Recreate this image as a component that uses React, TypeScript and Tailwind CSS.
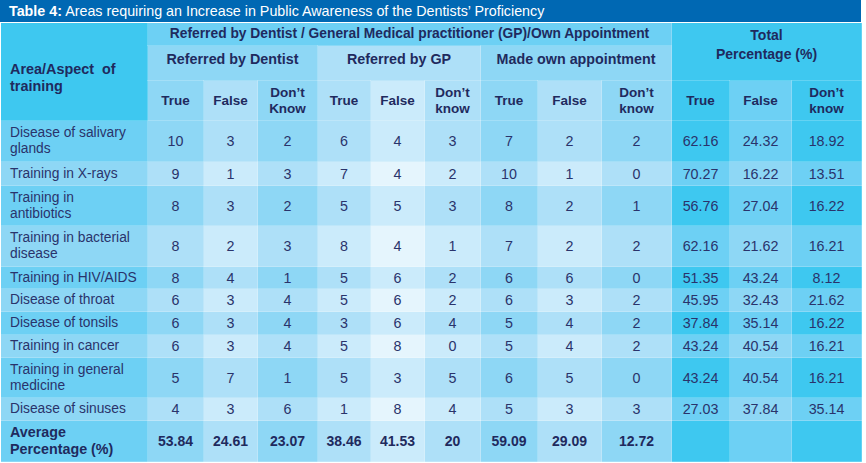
const shades = [
  "bg-[#3ec8f0]",
  "bg-[#6dd0f4]",
  "bg-[#8ed7f5]",
  "bg-[#aee0f8]",
  "bg-[#cbebfb]",
  "bg-[#e5f5fd]",
];

// shade index of each data column on a "dark" row; light rows use one step lighter
const colBase = [2, 3, 2, 3, 4, 3, 2, 3, 2, 0, 1, 0];
const colWidths = [147, 56, 54, 60, 53, 54, 56, 57, 64, 70, 58, 62, 70];

const rows = [
  { label: ["Disease of salivary", "glands"], h: "h-[41px]", v: ["10", "3", "2", "6", "4", "3", "7", "2", "2", "62.16", "24.32", "18.92"] },
  { label: ["Training in X-rays"], h: "h-[24px]", v: ["9", "1", "3", "7", "4", "2", "10", "1", "0", "70.27", "16.22", "13.51"] },
  { label: ["Training in", "antibiotics"], h: "h-[40px]", v: ["8", "3", "2", "5", "5", "3", "8", "2", "1", "56.76", "27.04", "16.22"] },
  { label: ["Training in bacterial", "disease"], h: "h-[41px]", v: ["8", "2", "3", "8", "4", "1", "7", "2", "2", "62.16", "21.62", "16.21"] },
  { label: ["Training in HIV/AIDS"], h: "h-[22px]", v: ["8", "4", "1", "5", "6", "2", "6", "6", "0", "51.35", "43.24", "8.12"] },
  { label: ["Disease of throat"], h: "h-[23px]", v: ["6", "3", "4", "5", "6", "2", "6", "3", "2", "45.95", "32.43", "21.62"] },
  { label: ["Disease of tonsils"], h: "h-[23px]", v: ["6", "3", "4", "3", "6", "4", "5", "4", "2", "37.84", "35.14", "16.22"] },
  { label: ["Training in cancer"], h: "h-[23px]", v: ["6", "3", "4", "5", "8", "0", "5", "4", "2", "43.24", "40.54", "16.21"] },
  { label: ["Training in general", "medicine"], h: "h-[40px]", v: ["5", "7", "1", "5", "3", "5", "6", "5", "0", "43.24", "40.54", "16.21"] },
  { label: ["Disease of sinuses"], h: "h-[23px]", v: ["4", "3", "6", "1", "8", "4", "5", "3", "3", "27.03", "37.84", "35.14"] },
];

const average = ["53.84", "24.61", "23.07", "38.46", "41.53", "20", "59.09", "29.09", "12.72", "", "", ""];

const subHeads: string[][] = [
  ["True"], ["False"], ["Don\u2019t", "Know"],
  ["True"], ["False"], ["Don\u2019t", "know"],
  ["True"], ["False"], ["Don\u2019t", "know"],
  ["True"], ["False"], ["Don\u2019t", "know"],
];

const cell = "border border-white/20 p-0";

const App = () => {
  return (
    <div className="w-[861px] font-['Liberation_Sans',Arial,sans-serif] text-[#2a336b]">
      <div className="h-[22px] bg-[#0068b3] pl-[9px] text-[14.3px] leading-[22px] text-white">
        <span className="font-bold">Table 4:</span> Areas requiring an Increase in Public Awareness of the Dentists’ Proficiency
      </div>
      <table className="w-[861px] table-fixed border-collapse">
        <colgroup>
          {colWidths.map((w, i) => (
            <col key={i} style={{ width: w }} />
          ))}
        </colgroup>
        <thead className="text-[13.5px] font-bold leading-[16px] text-[#1f2a5e]">
          <tr className="h-[23px]">
            <th rowSpan={3} className={`${cell} bg-[#3ec8f0] pl-[9px] pt-[12px] text-left align-middle text-[14.4px] leading-[17px]`}>
              Area/Aspect&nbsp; of
              <br />
              training
            </th>
            <th colSpan={9} className={`${cell} bg-[#6dd0f4] text-center align-middle text-[13.8px]`}>
              Referred by Dentist / General Medical practitioner (GP)/Own Appointment
            </th>
            <th colSpan={3} rowSpan={2} className={`${cell} bg-[#3ec8f0] pt-[3px] text-center align-top text-[14px] leading-[19px]`}>
              Total
              <br />
              Percentage (%)
            </th>
          </tr>
          <tr className="h-[35px]">
            <th colSpan={3} className={`${cell} bg-[#8ed7f5] pb-[8px] text-center align-middle text-[14.3px]`}>
              Referred by Dentist
            </th>
            <th colSpan={3} className={`${cell} bg-[#aee0f8] pb-[8px] text-center align-middle text-[14.3px]`}>
              Referred by GP
            </th>
            <th colSpan={3} className={`${cell} bg-[#8ed7f5] pb-[8px] text-center align-middle text-[14.3px]`}>
              Made own appointment
            </th>
          </tr>
          <tr className="h-[40px]">
            {subHeads.map((lines, i) => (
              <th key={i} className={`${cell} ${shades[colBase[i]]} text-center align-middle`}>
                {lines.map((l, j) => (
                  <div key={j}>{l}</div>
                ))}
              </th>
            ))}
          </tr>
        </thead>
        <tbody className="text-[13.8px] leading-[16px]">
          {rows.map((r, ri) => {
            const light = ri % 2 === 1;
            return (
              <tr key={ri} className={r.h}>
                <td className={`${cell} ${light ? "bg-[#8ed7f5]" : "bg-[#6dd0f4]"} pl-[9px] text-left align-middle`}>
                  {r.label.map((l, j) => (
                    <div key={j}>{l}</div>
                  ))}
                </td>
                {r.v.map((v, i) => (
                  <td key={i} className={`${cell} ${shades[colBase[i] + (light ? 1 : 0)]} text-center align-middle text-[14.3px]`}>
                    {v}
                  </td>
                ))}
              </tr>
            );
          })}
          <tr className="h-[41px] font-bold text-[#1f2a5e]">
            <td className={`${cell} bg-[#6dd0f4] pl-[9px] text-left align-middle text-[14.3px] leading-[17px]`}>
              Average
              <br />
              Percentage (%)
            </td>
            {average.map((v, i) => (
              <td key={i} className={`${cell} ${shades[colBase[i]]} text-center align-middle text-[14px]`}>
                {v}
              </td>
            ))}
          </tr>
        </tbody>
      </table>
    </div>
  );
};

export default App;
